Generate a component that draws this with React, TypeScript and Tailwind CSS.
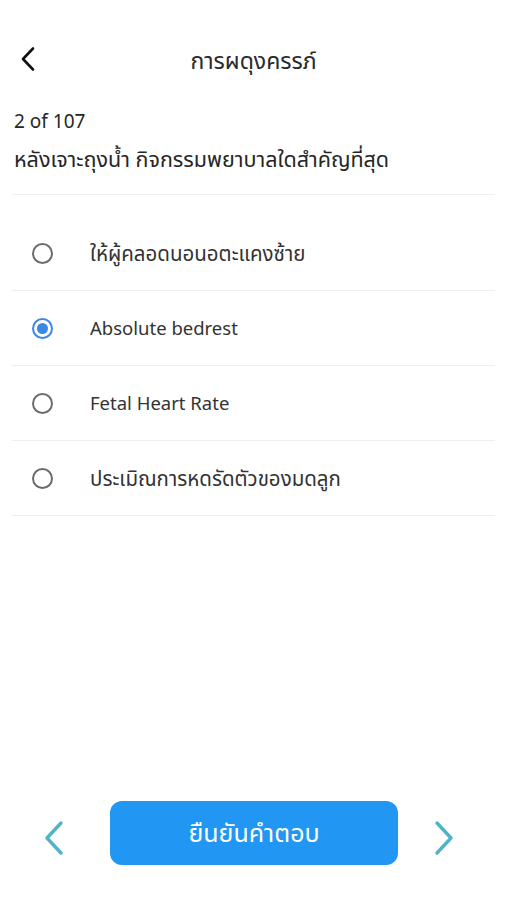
import { useState } from "react";

const options = [
    { label: "ให้ผู้คลอดนอนอตะแคงซ้าย", thai: true },
    { label: "Absolute bedrest", thai: false },
    { label: "Fetal Heart Rate", thai: false },
    { label: "ประเมิณการหดรัดตัวของมดลูก", thai: true },
];

const Radio = ({ checked }: { checked: boolean }) => (
    <span
        className={`flex h-[21px] w-[21px] items-center justify-center rounded-full border-2 ${checked ? "border-[#3b87e6]" : "border-[#6b6b6b]"}`}
    >
        {checked && <span className="h-[11px] w-[11px] rounded-full bg-[#3b87e6]" />}
    </span>
);

export default function App() {
    const [selected, setSelected] = useState<number>(1);
    return (
        <div
            className="flex h-[900px] w-[507px] flex-col bg-white text-[#262626]"
            style={{ fontFamily: '"Noto Sans", "Noto Sans Thai", sans-serif' }}
        >
            <div className="relative flex h-[60px] items-center justify-center mt-[30px]">
                <button className="absolute left-[19px] top-[16px]">
                    <svg width="18" height="26" viewBox="0 0 18 26" fill="none">
                        <path d="M14 2.5 L4 13 L14 23.5" stroke="#111" strokeWidth="2.6" strokeLinecap="round" strokeLinejoin="round" />
                    </svg>
                </button>
                <h1 className="text-[23px] leading-[30px] text-[#2a2a2a]">การผดุงครรภ์</h1>
            </div>

            <div className="px-[14px] pt-[18px]">
                <div className="text-[19px] leading-[26px]">2 of 107</div>
                <div className="mt-[12px] text-[21.5px] leading-[26px]">หลังเจาะถุงน้ำ กิจกรรมพยาบาลใดสำคัญที่สุด</div>
            </div>

            <div className="mx-[12px] mt-[22px] border-t border-[#f0f0f0]" />

            <div className="mx-[12px] mt-[21px] flex flex-col">
                {options.map((opt, i) => (
                    <button
                        key={i}
                        onClick={() => setSelected(i)}
                        className="flex h-[75px] items-center border-b border-[#efefef] text-left"
                    >
                        <span className="ml-[20px] mr-[37px]">
                            <Radio checked={selected === i} />
                        </span>
                        <span className={`${opt.thai ? "text-[20.5px]" : "text-[18.5px]"} text-[#333]`}>{opt.label}</span>
                    </button>
                ))}
            </div>

            <div className="mt-auto mb-[35px] flex items-center pl-[44px]">
                <button className="mt-[10px]">
                    <svg width="20" height="36" viewBox="0 0 20 36" fill="none">
                        <path d="M17 3 L3 18 L17 33" stroke="#4fb4ca" strokeWidth="3.4" strokeLinecap="round" strokeLinejoin="round" />
                    </svg>
                </button>
                <button className="ml-[46px] flex h-[64px] w-[288px] items-center justify-center rounded-[12px] bg-[#2196f3] text-[25px] text-white">
                    ยืนยันคำตอบ
                </button>
                <button className="ml-[36px] mt-[10px]">
                    <svg width="20" height="36" viewBox="0 0 20 36" fill="none">
                        <path d="M3 3 L17 18 L3 33" stroke="#4fb4ca" strokeWidth="3.4" strokeLinecap="round" strokeLinejoin="round" />
                    </svg>
                </button>
            </div>
        </div>
    );
}
